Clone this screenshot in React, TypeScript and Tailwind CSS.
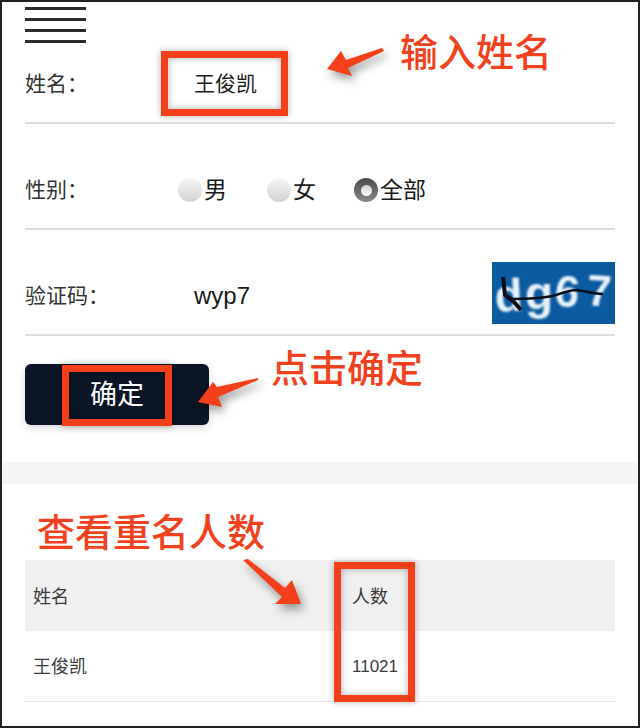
import React from "react";

const cjk = "font-['Liberation_Sans','Noto_Sans_CJK_SC',sans-serif]";

function Radio({ label, checked, className }: { label: string; checked?: boolean; className: string }) {
  return (
    <div className={`flex items-center gap-[2px] ${className}`}>
      {checked ? (
        <span className="w-[24px] h-[24px] rounded-full bg-gradient-to-b from-[#4a4a4a] to-[#8a8a8a] flex items-center justify-center">
          <span className="w-[11px] h-[11px] rounded-full bg-gradient-to-b from-[#cfcfcf] to-white" />
        </span>
      ) : (
        <span className="w-[24px] h-[24px] rounded-full bg-gradient-to-b from-[#f6f6f6] to-[#d2d2d2]" />
      )}
      <span className="text-[23px] text-[#1a1a1a]">{label}</span>
    </div>
  );
}

function Captcha() {
  return (
    <svg width="123" height="62" viewBox="0 0 123 62" className="block">
      <rect width="123" height="62" fill="#0c5aa0" />
      <g className="blur-[0.8px]">
        <text x="3" y="49" fontFamily="Liberation Sans" fontWeight="700" fontSize="46" fill="#e8f3fb" transform="rotate(-3 20 40)">d</text>
        <text x="33" y="47" fontFamily="Liberation Sans" fontWeight="700" fontSize="46" fill="#e8f3fb">g</text>
        <text x="63" y="45" fontFamily="Liberation Sans" fontWeight="700" fontSize="44" fill="#e8f3fb" transform="rotate(6 78 30)">6</text>
        <text x="95" y="44" fontFamily="Liberation Sans" fontWeight="700" fontSize="44" fill="#e8f3fb" transform="rotate(3 108 30)">7</text>
      </g>
      <path d="M13 33 L21 37 C34 37 50 36 61 34 C70 31 78 28 84 28 C94 29 102 32 111 32" fill="none" stroke="#0a0f1c" strokeWidth="2.5" />
      <path d="M11 15 L13 33 L22 40 L29 48" fill="none" stroke="#0a0f1c" strokeWidth="4" />
    </svg>
  );
}

function Callouts() {
  const box = "absolute border-[7px] border-[#f4401a] shadow-[0_0_7px_rgba(0,0,0,0.3),inset_0_0_7px_rgba(0,0,0,0.3)]";
  const note = "absolute text-[38px] leading-none font-medium text-[#f2411d] whitespace-nowrap";
  return (
    <>
      <div className={`${box} left-[161px] top-[51px] w-[127px] h-[65px]`} />
      <div className={`${box} left-[62px] top-[365px] w-[110px] h-[61px]`} />
      <div className={`${box} left-[334px] top-[562px] w-[81px] h-[140px]`} />
      <svg width="640" height="728" className="absolute left-0 top-0 drop-shadow-[3px_5px_5px_rgba(0,0,0,0.4)]">
        <g fill="#f4401a">
          <polygon points="327,69 341,51 346,60 382,48 384,51 348,68 352,76" />
          <polygon points="198,402 213,382 217,387 258,378 258,380 218,397 222,407" />
          <polygon points="243,560 248,559 285,588 292,580 301,604 275,604 282,597" />
        </g>
      </svg>
      <span className={`${note} left-[400px] top-[34px]`}>输入姓名</span>
      <span className={`${note} left-[271px] top-[350px]`}>点击确定</span>
      <span className={`${note} left-[37px] top-[514px]`}>查看重名人数</span>
    </>
  );
}

export default function App() {
  return (
    <div className={`relative w-[640px] h-[728px] bg-white overflow-hidden ${cjk}`}>
      <div className="flex flex-col gap-[8px] pl-[25px] pt-[7px]">
        <div className="w-[61px] h-[3px] bg-[#2b2b2b]" />
        <div className="w-[61px] h-[3px] bg-[#2b2b2b]" />
        <div className="w-[61px] h-[3px] bg-[#2b2b2b]" />
        <div className="w-[61px] h-[3px] bg-[#2b2b2b]" />
      </div>

      <div className="mx-[25px]">
        <div className="h-[81px] pt-[3px] flex items-center border-b-2 border-[#dddddd]">
          <span className="w-[153px] text-[21px] text-[#333333]">姓名：</span>
          <span className="pl-[16px] text-[21px] text-[#1a1a1a]">王俊凯</span>
        </div>
        <div className="h-[106px] pt-[28px] flex items-center border-b-2 border-[#dddddd]">
          <span className="w-[153px] text-[21px] text-[#333333]">性别：</span>
          <Radio label="男" className="w-[89px]" />
          <Radio label="女" className="w-[87px]" />
          <Radio label="全部" checked className="w-[90px]" />
        </div>
        <div className="h-[106px] pt-[28px] flex items-center justify-between border-b-2 border-[#dddddd]">
          <div className="flex items-center">
            <span className="w-[153px] text-[21px] text-[#333333]">验证码：</span>
            <span className="pl-[16px] text-[24px] text-[#1a1a1a]">wyp7</span>
          </div>
          <div className="-mt-[6px]">
            <Captcha />
          </div>
        </div>
        <button className="mt-[28px] pt-[2px] w-[184px] h-[61px] rounded-[6px] bg-[#0b1526] text-white text-[27px] flex items-center justify-center shadow-[0_3px_8px_rgba(0,0,0,0.15)]">
          确定
        </button>
      </div>

      <div className="mt-[37px] h-[22px] bg-[#f5f5f5]" />

      <div className="mx-[25px] mt-[76px] text-[18px] text-[#3a3a3a]">
        <div className="h-[71px] pt-[3px] flex items-center bg-[#f0f0f0]">
          <span className="w-[327px] pl-[8px]">姓名</span>
          <span>人数</span>
        </div>
        <div className="h-[71px] pt-[2px] flex items-center border-b border-[#e5e5e5]">
          <span className="w-[327px] pl-[8px]">王俊凯</span>
          <span className="text-[17px]">11021</span>
        </div>
      </div>

      <Callouts />
      <div className="absolute inset-0 border-2 border-[#222222] pointer-events-none" />
    </div>
  );
}
